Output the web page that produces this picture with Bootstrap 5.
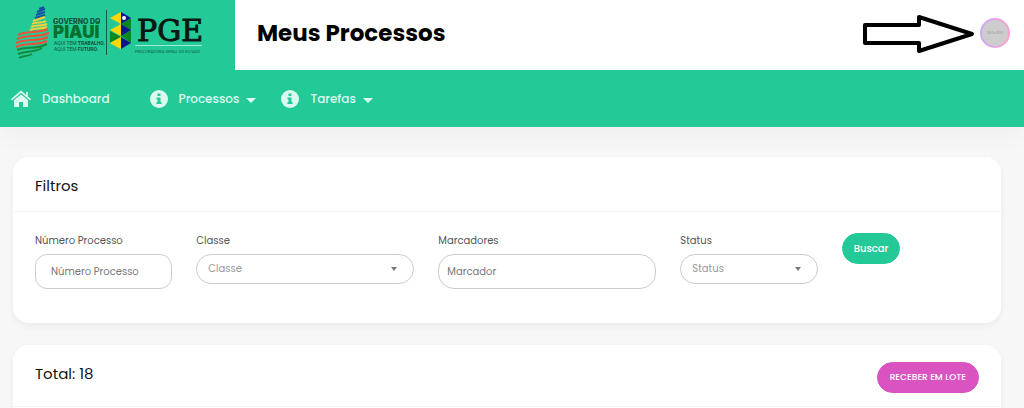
<!DOCTYPE html>
<html lang="pt-BR">
<head>
<meta charset="utf-8">
<meta name="viewport" content="width=device-width, initial-scale=1">
<title>Meus Processos</title>
<link href="https://cdn.jsdelivr.net/npm/bootstrap@5.3.0/dist/css/bootstrap.min.css" rel="stylesheet">
<style>
  :root { --brand: #23ca97; --pink: #d953c1; }
  body { font-family: Poppins, Inter, sans-serif; font-size: 10px; line-height: 16px; background: #f7f7f7; color: #555; }
  .page { min-height: 100vh; }
  .topbar { background: #fff; height: 70px; }
  .brand-box { background: var(--brand); width: 235px; }
  .page-title { font-size: 23px; line-height: 32px; font-weight: 700; color: #000; margin-left: 22px; }
  .avatar { width: 30px; height: 30px; padding: 2px; background: linear-gradient(90deg, #c9a9f7, #ff9fd2); margin: 0 14px 0 4px; }
  .avatar span { background: #cdcdcd; color: #999; font-size: 4px; line-height: 4px; }
  .main-menu { background: var(--brand); height: 57px; padding-left: 11px; box-shadow: 0 8px 24px rgba(0, 0, 0, .04); }
  .main-menu .nav-link { color: #dcf9ef; font-size: 12px; line-height: 18px; font-weight: 500; padding: 0; }
  .main-menu .nav { column-gap: 25px; }
  .main-menu .home-item { margin-right: 15px; }
  .main-menu svg { flex: none; }
  .menu-icon { margin-right: 11px; }
  .dropdown-toggle::after { border-width: 5px 5px 0; margin-left: 7px; vertical-align: 0; }
  .content { padding: 30px 23px 0 13px; gap: 22px; }
  .panel { --bs-card-border-width: 0; --bs-card-border-radius: 16px; --bs-card-inner-border-radius: 16px; box-shadow: 0 3px 7px rgba(0, 0, 0, .05); }
  .panel .card-header { background: #fff; border-bottom: 1px solid #f4f4f4; padding: 17px 22px 13px; }
  .panel h2 { font-size: 15px; line-height: 24px; font-weight: 400; color: #111; margin: 0; }
  .panel .card-body { padding: 21px 22px 34px; }
  .form-label { margin-bottom: 5px; }
  .field { font-size: 10px; line-height: 16px; border: 1px solid #ccc; border-radius: 16px; color: #999; background-color: #fff; }
  .field::placeholder { color: #777; }
  input.field { height: 35px; padding: 8px; }
  input.field.wide-pad { padding-left: 15px; border-radius: 12px; }
  select.field { height: 30px; padding: 6px 28px 6px 11px;
    background-image: url("data:image/svg+xml,%3Csvg xmlns='http://www.w3.org/2000/svg' viewBox='0 0 6 4'%3E%3Cpath fill='%23777' d='M0 0h6L3 4z'/%3E%3C/svg%3E");
    background-size: 6px 4px; background-position: right 16px center; }
  .pill { --bs-btn-color: #fff; --bs-btn-hover-color: #fff; --bs-btn-font-size: 10px; font-weight: 500; line-height: 17px; --bs-btn-padding-y: 6px; --bs-btn-padding-x: 11px; --bs-btn-border-radius: 16px; white-space: nowrap; }
  .pill-green { --bs-btn-bg: var(--brand); --bs-btn-border-color: var(--brand); --bs-btn-hover-bg: #1db486; }
  .pill-pink { --bs-btn-bg: var(--pink); --bs-btn-border-color: var(--pink); --bs-btn-hover-bg: #c544ae; --bs-btn-font-size: 9px; --bs-btn-padding-x: 12px; }
</style>
</head>
<body>
<div class="page d-flex flex-column">
  <header class="topbar d-flex align-items-stretch">
    <a href="#" class="brand-box flex-shrink-0" aria-label="Governo do Piauí - PGE">
      <svg width="235" height="70" viewBox="0 0 235 70">
        <g fill="none" stroke-width="2">
          <g stroke="#164fa3"><path d="M39 9l5-2M37 12l8-3M36 15l9-3M35 18l10-3"/></g>
          <g stroke="#f5d03b"><path d="M33 21l12-4M32 24c5-3 9 0 14-3M31 27c6-3 10 0 16-3M30 30c6-3 11 0 17-3"/></g>
          <g stroke="#f04e36"><path d="M18 35c10-5 18-1 30-6M17 39c11-5 20-1 32-6M16 43c11-5 21-1 32-6M16 47c10-5 20-1 31-6"/></g>
          <g stroke="#16893b"><path d="M17 50c10-4 19 0 30-6M18 54c9-4 17-1 24-6M19 58c5-3 8-1 13-4"/></g>
        </g>
        <text x="53" y="24" font-family="Inter, sans-serif" font-size="7" font-weight="800" fill="#14513a">GOVERNO DO</text>
        <text x="53" y="38" font-family="Inter, sans-serif" font-size="17" font-weight="900" fill="#08702d">PIAUÍ</text>
        <g font-family="Roboto, sans-serif" font-size="5" fill="#14513a">
          <text x="54" y="45">AQUI TEM <tspan font-weight="700">TRABALHO.</tspan></text>
          <text x="54" y="51">AQUI TEM <tspan font-weight="700">FUTURO.</tspan></text>
        </g>
        <path d="M106.500 10v45" stroke="#165b44"/>
        <path fill="#ffd60a" d="M121 12v12l-11-6zM121 24v12l-11-6zM110 31l11 6v12l-11-6 11-6z"/>
        <path fill="#078a1d" d="M110 31l11 6-11 6zM131 18v12l-10-6zM131 30v13l-10-7z"/>
        <path fill="#ffd60a" d="M110 43l11-6v12z"/>
        <path fill="#10158d" d="M121 12l10 6-10 6zM121 24l10 6-10 6zM121 37l10 6-10 6z"/>
        <circle cx="124" cy="18" r="2" fill="#fff"/>
        <text x="137" y="41" font-family="DejaVu Serif, serif" font-size="30" fill="#0a1713" stroke="#0a1713">PGE</text>
        <path d="M135 45.500h67" stroke="#a5e8d3"/>
        <text x="135" y="53" font-family="Roboto, sans-serif" font-size="4" fill="#135d47">PROCURADORIA GERAL DO ESTADO</text>
      </svg>
    </a>
    <h1 class="page-title mb-0 pb-1 align-self-center text-nowrap">Meus Processos</h1>
    <div class="d-flex align-items-center ms-auto pb-1">
      <svg width="114" height="42" viewBox="0 0 114 42" aria-hidden="true"><path d="M3 13h54V5l53 17-53 17v-8H3z" fill="#fff" stroke="#000" stroke-width="4" stroke-linejoin="round"/></svg>
      <a href="#" class="avatar rounded-circle d-flex text-decoration-none" aria-label="Perfil"><span class="rounded-circle flex-fill d-flex align-items-center justify-content-center">300x300</span></a>
    </div>
  </header>

  <nav class="main-menu d-flex align-items-center" aria-label="Principal">
    <ul class="nav flex-nowrap">
      <li class="nav-item home-item"><a class="nav-link d-flex align-items-center" href="#">
        <svg class="menu-icon" width="20" height="18" viewBox="0 0 20 18" fill="currentColor"><path d="M10 4l7 6v6.500q0 .5-.5.5H12v-5H8v5H3.500q-.5 0-.5-.5V10z"/><path d="M1 9.300l9-7.800 9 7.800M16 2.500V6" fill="none" stroke="currentColor" stroke-width="1.700" stroke-linecap="round"/><path d="M2.500 10.200L10 3.700l7.500 6.500" fill="none" stroke="#23ca97" stroke-width=".8"/></svg>Dashboard</a></li>
      <li class="nav-item dropdown"><a class="nav-link d-flex align-items-center" href="#" role="button">
        <svg class="menu-icon" width="18" height="18" viewBox="0 0 18 18"><circle cx="9" cy="9" r="9" fill="currentColor"/><path fill="#23ca97" d="M7.500 3.500h3v2.500h-3zM6.500 7.500h4v4.500h1V14h-5v-2h1V9.500h-1z"/></svg><span class="dropdown-toggle">Processos</span></a></li>
      <li class="nav-item dropdown"><a class="nav-link d-flex align-items-center" href="#" role="button">
        <svg class="menu-icon" width="18" height="18" viewBox="0 0 18 18"><circle cx="9" cy="9" r="9" fill="currentColor"/><path fill="#23ca97" d="M7.500 3.500h3v2.500h-3zM6.500 7.500h4v4.500h1V14h-5v-2h1V9.500h-1z"/></svg><span class="dropdown-toggle">Tarefas</span></a></li>
    </ul>
  </nav>

  <main class="content d-flex flex-column flex-fill">
    <section class="card panel">
      <div class="card-header"><h2>Filtros</h2></div>
      <form class="card-body">
        <div class="row">
          <div class="col-2"><label class="form-label d-block text-nowrap" for="numero">Número Processo</label><input id="numero" class="form-control field wide-pad" type="text" placeholder="Número Processo"></div>
          <div class="col-3"><label class="form-label d-block" for="classe">Classe</label><select id="classe" class="form-select field"><option>Classe</option></select></div>
          <div class="col-3"><label class="form-label d-block" for="marcador">Marcadores</label><input id="marcador" class="form-control field" type="text" placeholder="Marcador"></div>
          <div class="col-2"><label class="form-label d-block" for="status">Status</label><select id="status" class="form-select field"><option>Status</option></select></div>
          <div class="col-2"><button type="button" class="btn pill pill-green">Buscar</button></div>
        </div>
      </form>
    </section>
    <section class="card panel flex-fill rounded-bottom-0">
      <div class="card-header d-flex justify-content-between">
        <h2>Total: 18</h2>
        <button type="button" class="btn pill pill-pink">RECEBER EM LOTE</button>
      </div>
    </section>
  </main>
</div>
<script src="https://cdn.jsdelivr.net/npm/bootstrap@5.3.0/dist/js/bootstrap.bundle.min.js"></script>
</body>
</html>
